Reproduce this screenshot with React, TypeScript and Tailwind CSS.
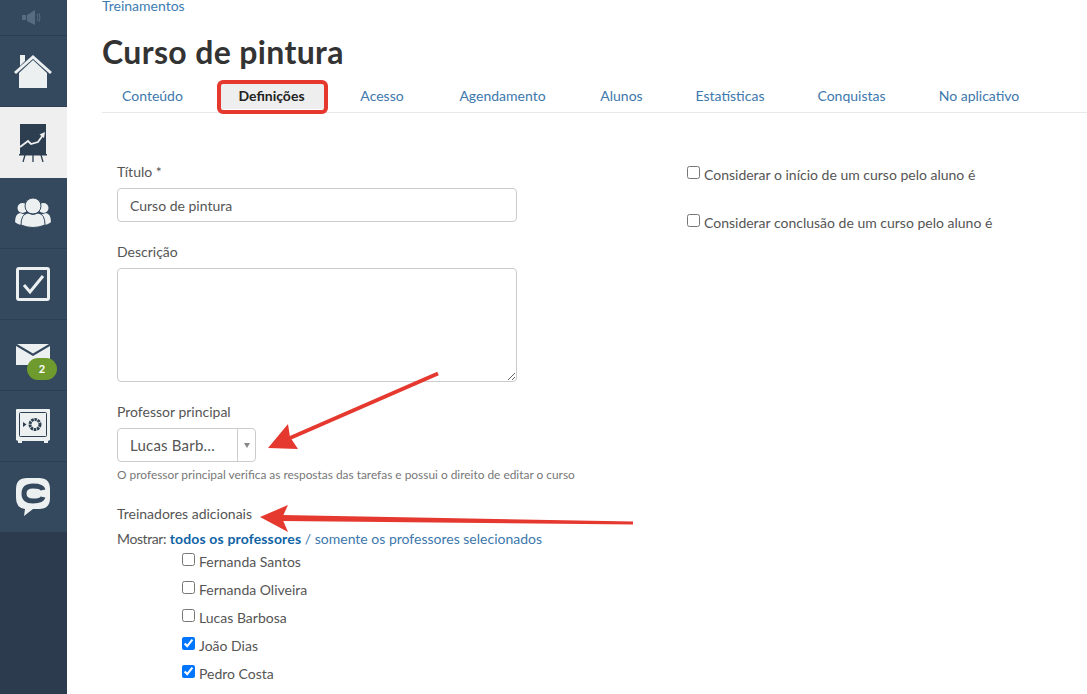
import type { ReactNode } from "react";

const tabs = [
  { label: "Conteúdo", width: "w-[101px]" },
  { label: "Definições", width: "w-[107px]" },
  { label: "Acesso", width: "w-[84px]" },
  { label: "Agendamento", width: "w-[127px]" },
  { label: "Alunos", width: "w-[81px]" },
  { label: "Estatísticas", width: "w-[106px]" },
  { label: "Conquistas", width: "w-[107px]" },
  { label: "No aplicativo", width: "w-[118px]" },
];

const teachers = [
  { name: "Fernanda Santos", checked: false },
  { name: "Fernanda Oliveira", checked: false },
  { name: "Lucas Barbosa", checked: false },
  { name: "João Dias", checked: true },
  { name: "Pedro Costa", checked: true },
];

function NavItem({ children, active }: { children: ReactNode; active?: boolean }) {
  return (
    <div
      className={
        active
          ? "relative flex h-[71px] items-center justify-center bg-[#efefef] pr-[2px]"
          : "relative flex h-[71px] items-center justify-center border-b border-[#2c3e50] pr-[2px]"
      }
    >
      {children}
    </div>
  );
}

function Sidebar() {
  return (
    <aside className="flex w-[67px] shrink-0 flex-col bg-[#2c3c4e]">
      <div className="flex h-[36px] items-center justify-center border-b border-[#2c3e50] bg-[#34495e] pr-[2px]">
        <svg width="22" height="16" viewBox="0 0 22 16" className="opacity-90">
          <path d="M0 5h4v5H0zM5 5l8-5v15l-8-4z" fill="#5c7085" />
          <path d="M15 4q2 3.500 0 7M17 3q2 4.500 0 9" stroke="#5c7085" fill="none" />
        </svg>
      </div>
      <div className="bg-[#34495e]">
        <NavItem>
          <svg width="38" height="34" viewBox="0 0 38 34">
            <path d="M19 6 5 19v15h28V19z" fill="#ecf0f1" />
            <path d="M1 19 19 3l18 16" fill="none" stroke="#ecf0f1" strokeWidth="3" />
            <path d="M6 1h5v6l-5 5z" fill="#ecf0f1" />
          </svg>
        </NavItem>
        <NavItem active>
          <svg width="28" height="38" viewBox="0 0 28 38">
            <path d="M1 0h26v30H1z" fill="#2c3e50" />
            <path d="M1 23l8-6 3 3 7-2 5-7" fill="none" stroke="#efefef" strokeWidth="1.800" />
            <path d="M26 8l-1 6-4.500-3.500z" fill="#efefef" />
            <path d="M0 30h28v1.500H0z" fill="#2c3e50" />
            <path d="M6 31 4 38M14 31v7M22 31l2 7" stroke="#2c3e50" strokeWidth="1.300" />
          </svg>
        </NavItem>
        <NavItem>
          <svg width="36" height="30" viewBox="0 0 36 30">
            <circle cx="7.500" cy="10" r="5" fill="#ecf0f1" />
            <circle cx="28.500" cy="10" r="5" fill="#ecf0f1" />
            <path d="M0 24q0-8 5-9l6 2-3 10q-5 0-8-3zM36 24q0-8-5-9l-6 2 3 10q5 0 8-3z" fill="#ecf0f1" />
            <circle cx="18" cy="8" r="8" fill="#ecf0f1" stroke="#34495e" />
            <path d="M6 27q0-11 7-12 5 3 10 0 7 1 7 12-12 5-24 0z" fill="#ecf0f1" stroke="#34495e" />
          </svg>
        </NavItem>
        <NavItem>
          <svg width="34" height="34" viewBox="0 0 34 34">
            <rect x="1.500" y="1.500" width="31" height="31" rx="1.500" fill="none" stroke="#ecf0f1" strokeWidth="3" />
            <path d="M8 18l6 7L27 9" fill="none" stroke="#ecf0f1" strokeWidth="3" />
          </svg>
        </NavItem>
        <NavItem>
          <svg width="34" height="21" viewBox="0 0 34 21" className="mb-[1px]">
            <path d="M0 2l17 10L34 2v19H0z" fill="#ecf0f1" />
            <path d="M1 0h32L17 9.500z" fill="#ecf0f1" />
          </svg>
          <span className="absolute left-[27px] top-[38px] flex h-[22px] w-[30px] items-center justify-center rounded-full bg-[#6f9a2d] text-[11px] font-bold text-white">
            2
          </span>
        </NavItem>
        <NavItem>
          <svg width="34" height="34" viewBox="0 0 34 34">
            <path d="M1 0h32a1 1 0 0 1 1 1v30l-2 1v2h-4v-2H6v2H2v-2l-2-1V1a1 1 0 0 1 1-1z" fill="#ecf0f1" />
            <rect x="3.500" y="3.500" width="27" height="24" rx="1" fill="none" stroke="#2c3e50" />
            <circle cx="19" cy="15.500" r="5" fill="none" stroke="#2c3e50" strokeWidth="3" strokeDasharray="2.500 0.700" />
            <path d="M7 13l3.500 2.500L7 18z" fill="#2c3e50" />
          </svg>
        </NavItem>
        <div className="flex h-[70px] items-center justify-center pr-[2px]">
          <svg width="34" height="38" viewBox="0 0 34 38">
            <path d="M11 0h12q11 0 11 11v9q0 11-11 11h-6l-9 7 1-7q-9-1-9-11v-9Q0 0 11 0z" fill="#ecf0f1" />
            <path d="M27 12Q26 8 17 8 8 8 8 15.500T17 23q9 0 10-4" fill="none" stroke="#34495e" strokeWidth="5" />
          </svg>
        </div>
      </div>
    </aside>
  );
}

function Field({ label, children }: { label: string; children: ReactNode }) {
  return (
    <div>
      <label className="block h-[20px] leading-[20px]">{label}</label>
      <div className="mt-[6px]">{children}</div>
    </div>
  );
}

export default function App() {
  return (
    <div className="relative flex h-[694px] w-[1087px] overflow-hidden bg-white font-['Lato','Open_Sans',sans-serif] text-[14px] text-[#555]">
      <Sidebar />

      <main className="min-w-0 flex-1 pl-[35px]">
        <a className="block h-[14px] leading-[12px] text-[#3d7cb0]">Treinamentos</a>
        <h1 className="mt-[17px] text-[32px] font-bold leading-[42px] tracking-[0.35px] text-[#333]">Curso de pintura</h1>

        <nav className="mt-[10px] flex h-[30px] gap-[15px] border-b border-[#e8e8e8]">
          {tabs.map((tab) =>
            tab.label === "Definições" ? (
              <a
                key={tab.label}
                className={`relative h-[26px] bg-[#eee] text-center font-bold leading-[26px] text-[#222] ${tab.width}`}
              >
                {tab.label}
                <span className="absolute -left-px -right-[3px] -top-[3px] -bottom-[5px] rounded-[6px] border-[4px] border-[#e5392f]" />
              </a>
            ) : (
              <a key={tab.label} className={`h-[26px] text-center leading-[26px] text-[#3d78ac] ${tab.width}`}>
                {tab.label}
              </a>
            ),
          )}
        </nav>

        <div className="flex pl-[15px] pt-[49px]">
          <div className="w-[400px] shrink-0">
            <Field label="Título *">
              <input
                readOnly
                value="Curso de pintura"
                className="block h-[34px] w-full rounded border border-[#ccc] px-3 text-[#555] outline-none"
              />
            </Field>
            <div className="mt-[20px]">
              <Field label="Descrição">
                <textarea readOnly className="block h-[114px] w-full rounded border border-[#ccc] outline-none" />
              </Field>
            </div>
            <div className="mt-[20px]">
              <Field label="Professor principal">
                <div className="flex h-[34px] w-[139px] items-center rounded border border-[#ccc]">
                  <span className="flex-1 pl-3 text-[15px] tracking-[0.2px]">Lucas Barb…</span>
                  <span className="flex h-full w-[18px] items-center justify-center border-l border-[#ccc]">
                    <span className="h-0 w-0 border-x-[3px] border-t-[5px] border-x-transparent border-t-[#888]" />
                  </span>
                </div>
              </Field>
            </div>
            <p className="mt-[5px] whitespace-nowrap text-[11.9px] leading-[16px] text-[#777]">
              O professor principal verifica as respostas das tarefas e possui o direito de editar o curso
            </p>
            <div className="mt-[21px] h-[20px] leading-[20px]">Treinadores adicionais</div>
            <div className="mt-[5px] h-[20px] whitespace-nowrap leading-[20px]">
              <span className="tracking-[-0.4px]">Mostrar:</span>{" "}
              <b className="tracking-[0.15px] text-[#0f63a5]">todos os professores</b>{" "}
              <span className="text-[#3d78ac]">/ somente os professores selecionados</span>
            </div>
            <ul className="-mt-[2px] pl-[65px]">
              {teachers.map((t) => (
                <li key={t.name} className="flex h-[28px] items-center gap-[4px]">
                  <input type="checkbox" readOnly checked={t.checked} className="mb-[3px] h-[13px] w-[13px]" />
                  <span>{t.name}</span>
                </li>
              ))}
            </ul>
          </div>

          <div className="ml-[170px] pt-[2px]">
            <label className="flex h-[20px] items-center gap-[4px] whitespace-nowrap">
              <input type="checkbox" readOnly className="mb-[3px] h-[13px] w-[13px]" />
              Considerar o início de um curso pelo aluno é
            </label>
            <label className="mt-[28px] flex h-[20px] items-center gap-[4px] whitespace-nowrap">
              <input type="checkbox" readOnly className="mb-[3px] h-[13px] w-[13px]" />
              Considerar conclusão de um curso pelo aluno é
            </label>
          </div>
        </div>
      </main>

      {/* annotation arrows */}
      <svg width="1087" height="694" className="pointer-events-none absolute inset-0">
        <path d="M438 373.500 290 438" stroke="#e5392f" strokeWidth="4" />
        <path d="M268 448 288 424l2 13 8 12z" fill="#e5392f" />
        <path d="M633 521.500 633 524.500 282 521 282 515z" fill="#e5392f" />
        <path d="M260 517 288 505l-6 13 6 14z" fill="#e5392f" />
      </svg>
    </div>
  );
}
